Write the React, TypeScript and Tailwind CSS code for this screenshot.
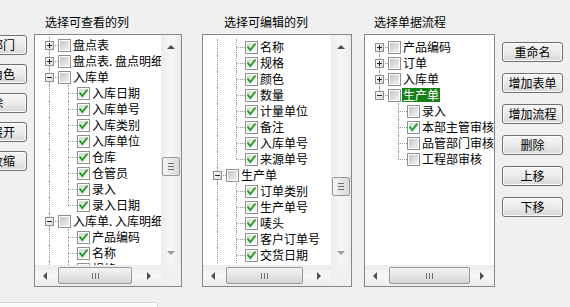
import React from 'react';

type RowDef = {
  lvl: 0 | 1;
  exp?: '+' | '-';
  ck?: boolean;
  text: string;
  root?: 'full' | 'top' | 'bottom' | 'none';
  child?: 'full' | 'top';
  sel?: boolean;
};

const kids = (names: string[], root: RowDef['root'], lastOpen: boolean, checks?: boolean[]): RowDef[] =>
  names.map((text, i) => ({
    lvl: 1,
    ck: checks ? checks[i] : true,
    text,
    root,
    child: i === names.length - 1 && !lastOpen ? 'top' : 'full',
  }));

const viewRows: RowDef[] = [
  { lvl: 0, exp: '+', text: '盘点表', root: 'full' },
  { lvl: 0, exp: '+', text: '盘点表. 盘点明细', root: 'full' },
  { lvl: 0, exp: '-', text: '入库单', root: 'full' },
  ...kids(['入库日期', '入库单号', '入库类别', '入库单位', '仓库', '仓管员', '录入', '录入日期'], 'full', false),
  { lvl: 0, exp: '-', text: '入库单. 入库明细', root: 'full' },
  ...kids(['产品编码', '名称', '规格'], 'full', true),
];

const editRows: RowDef[] = [
  ...kids(['名称', '规格', '颜色', '数量', '计量单位', '备注', '入库单号', '来源单号'], 'full', false),
  { lvl: 0, exp: '-', text: '生产单', root: 'full' },
  ...kids(['订单类别', '生产单号', '唛头', '客户订单号', '交货日期'], 'full', true),
];

const flowRows: RowDef[] = [
  { lvl: 0, exp: '+', text: '产品编码', root: 'bottom' },
  { lvl: 0, exp: '+', text: '订单', root: 'full' },
  { lvl: 0, exp: '+', text: '入库单', root: 'full' },
  { lvl: 0, exp: '-', text: '生产单', root: 'top', sel: true },
  ...kids(['录入', '本部主管审核', '品管部门审核', '工程部审核'], 'none', false, [false, true, false, false]),
];

function Expander({ sign }: { sign: '+' | '-' }) {
  return (
    <svg width="9" height="9" viewBox="0 0 9 9" className="block">
      <defs>
        <linearGradient id="expg" x1="0" y1="0" x2="1" y2="1">
          <stop offset="0" stopColor="#ffffff" />
          <stop offset="1" stopColor="#d8d8d8" />
        </linearGradient>
      </defs>
      <rect x="0.5" y="0.5" width="8" height="8" fill="url(#expg)" stroke="#8f8f8f" />
      <path d="M2 4.5H7" stroke="#222" />
      {sign === '+' && <path d="M4.5 2V7" stroke="#222" />}
    </svg>
  );
}

function Check({ on }: { on?: boolean }) {
  return (
    <div className="relative w-[13px] h-[13px] border border-[#8e8f8f] bg-white p-[1px]">
      <div
        className={
          on
            ? 'w-full h-full bg-linear-to-br from-[#d4dcd4] to-[#f6fbf6]'
            : 'w-full h-full bg-linear-to-br from-[#c4c4c4] to-[#f2f2f2]'
        }
      />
      {on && (
        <svg width="13" height="13" viewBox="0 0 13 13" className="absolute -left-[1px] -top-[1px]">
          <path d="M3 6.2L5.3 9L10 3.2" fill="none" stroke="#2a9a2a" strokeWidth="1.9" strokeLinecap="round" />
        </svg>
      )}
    </div>
  );
}

function TreeRow({ r }: { r: RowDef }) {
  const line = 'absolute border-dotted border-[#9a9a9a]';
  return (
    <div className={`relative h-[16px] leading-[16px] ${r.lvl === 0 ? 'pl-[37px]' : 'pl-[56px]'}`}>
      {r.root === 'full' && <div className={`${line} left-[14px] top-0 h-[16px] border-l`} />}
      {r.root === 'top' && <div className={`${line} left-[14px] top-0 h-[8px] border-l`} />}
      {r.root === 'bottom' && <div className={`${line} left-[14px] top-[8px] h-[8px] border-l`} />}
      {r.lvl === 0 ? (
        <>
          <div className={`${line} left-[14px] top-[8px] w-[9px] border-t`} />
          <div className="absolute left-[10px] top-[4px]">
            <Expander sign={r.exp || '+'} />
          </div>
          <div className="absolute left-[23px] top-[2px]">
            <Check on={r.ck} />
          </div>
        </>
      ) : (
        <>
          <div className={`${line} left-[33px] top-0 border-l ${r.child === 'top' ? 'h-[8px]' : 'h-[16px]'}`} />
          <div className={`${line} left-[33px] top-[8px] w-[9px] border-t`} />
          <div className="absolute left-[42px] top-[2px]">
            <Check on={r.ck} />
          </div>
        </>
      )}
      <span className={r.sel ? 'inline-block px-[1px] leading-[14px] bg-[#167f16] text-white' : 'px-[1px]'}>{r.text}</span>
    </div>
  );
}

function Arrow({ dir, light }: { dir: 'up' | 'down' | 'left' | 'right'; light?: boolean }) {
  const pts = {
    up: '0,4 4,0 8,4',
    down: '0,0 8,0 4,4',
    left: '4,0 4,8 0,4',
    right: '0,0 4,4 0,8',
  }[dir];
  const v = dir === 'up' || dir === 'down';
  return (
    <svg width={v ? 8 : 4} height={v ? 4 : 8} viewBox={v ? '0 0 8 4' : '0 0 4 8'}>
      <polygon points={pts} fill={light ? '#9a9a9a' : '#505050'} />
    </svg>
  );
}

function VScroll({ thumb }: { thumb: string }) {
  return (
    <div className="w-[20px] shrink-0 flex flex-col bg-linear-to-r from-[#ececec] via-[#f7f7f7] to-[#ececec]">
      <div className="h-[24px] flex items-center justify-center">
        <Arrow dir="up" />
      </div>
      <div className="flex-1">
        <div className={`${thumb} h-[19px] mx-[1px] rounded-[2px] border border-[#979797] bg-linear-to-r from-[#f4f4f4] to-[#d9d9d9] flex flex-col items-center justify-center gap-[2px]`}>
          <div className="w-[6px] h-px bg-[#6e6e6e]" />
          <div className="w-[6px] h-px bg-[#6e6e6e]" />
          <div className="w-[6px] h-px bg-[#6e6e6e]" />
        </div>
      </div>
      <div className="h-[24px] flex items-center justify-center">
        <Arrow dir="down" light />
      </div>
    </div>
  );
}

function HScroll({ thumb }: { thumb: string }) {
  return (
    <div className="flex-1 flex items-stretch bg-linear-to-b from-[#ececec] via-[#f7f7f7] to-[#ececec]">
      <div className="w-[20px] flex items-center justify-center">
        <Arrow dir="left" />
      </div>
      <div className="flex-1 py-[2px]">
        <div className={`${thumb} h-full rounded-[2px] border border-[#979797] bg-linear-to-b from-[#f4f4f4] to-[#d6d6d6] flex items-center justify-center gap-[2px]`}>
          <div className="w-px h-[6px] bg-[#6e6e6e]" />
          <div className="w-px h-[6px] bg-[#6e6e6e]" />
          <div className="w-px h-[6px] bg-[#6e6e6e]" />
        </div>
      </div>
      <div className="w-[24px] flex items-center justify-center">
        <Arrow dir="right" />
      </div>
    </div>
  );
}

function Panel({
  title,
  titlePad,
  width,
  rows,
  pad,
  vthumb,
  hthumb,
}: {
  title: string;
  titlePad: string;
  width: string;
  rows: RowDef[];
  pad: string;
  vthumb?: string;
  hthumb: string;
}) {
  return (
    <div className={`${width} shrink-0 flex flex-col`}>
      <div className={`h-[34px] flex items-end pb-[5px] leading-[14px] ${titlePad}`}>{title}</div>
      <div className="h-[253px] border border-[#828790] bg-white flex flex-col">
        <div className="flex-1 min-h-0 flex">
          <div className={`flex-1 min-w-0 overflow-hidden whitespace-nowrap ${pad}`}>
            {rows.map((r, i) => (
              <TreeRow key={i} r={r} />
            ))}
          </div>
          {vthumb && <VScroll thumb={vthumb} />}
        </div>
        <div className="h-[21px] shrink-0 flex">
          <HScroll thumb={hthumb} />
          {vthumb && <div className="w-[20px] bg-[#f0f0f0]" />}
        </div>
      </div>
    </div>
  );
}

function Btn({ children, className }: { children: React.ReactNode; className: string }) {
  return (
    <button
      className={`h-[20px] rounded-[3px] border border-[#707070] bg-linear-to-b from-[#f5f5f5] via-[#ebebeb] to-[#d7d7d7] shadow-[inset_0_0_0_1px_#fbfbfb] text-[12px] leading-[16px] text-black ${className}`}
    >
      {children}
    </button>
  );
}

export default function App() {
  return (
    <div className="w-[570px] h-[307px] overflow-hidden bg-[#f0f0f0] text-[12px] text-black font-['Noto_Sans_CJK_SC',sans-serif]">
      <div className="flex items-start h-[287px]">
        <div className="w-[72px] ml-[-45px] shrink-0 pt-[35px] flex flex-col gap-[9px]">
          {['增加部门', '增加角色', '删除', '全部展开', '全部收缩'].map(t => (
            <Btn key={t} className="w-[72px]">
              {t}
            </Btn>
          ))}
        </div>
        <div className="ml-[7px]">
          <Panel
            title="选择可查看的列"
            titlePad="pl-[11px]"
            width="w-[148px]"
            rows={viewRows}
            pad="pt-[2px]"
            vthumb="mt-[98px]"
            hthumb="ml-[3px] w-[74px]"
          />
        </div>
        <div className="ml-[20px]">
          <Panel
            title="选择可编辑的列"
            titlePad="pl-[22px]"
            width="w-[150px]"
            rows={editRows}
            pad="pt-[4px]"
            vthumb="mt-[118px]"
            hthumb="ml-[3px] w-[77px]"
          />
        </div>
        <div className="ml-[12px]">
          <Panel
            title="选择单据流程"
            titlePad="pl-[10px]"
            width="w-[131px]"
            rows={flowRows}
            pad="pt-[4px]"
            hthumb="ml-[4px] w-[81px]"
          />
        </div>
        <div className="ml-[7px] w-[61px] shrink-0 pt-[42px] flex flex-col gap-[11px]">
          {['重命名', '增加表单', '增加流程', '删除', '上移', '下移'].map(t => (
            <Btn key={t} className="w-[61px]">
              {t}
            </Btn>
          ))}
        </div>
      </div>
      <div className="mt-[15px] ml-[-4px] w-[162px] h-[30px] border border-[#d6d6d6] rounded-[3px] bg-[#fafafa]" />
    </div>
  );
}
